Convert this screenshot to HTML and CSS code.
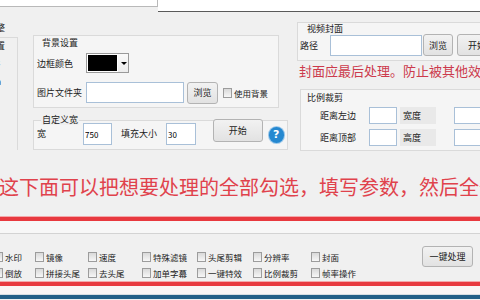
FILE: index.html
```html
<!DOCTYPE html>
<html lang="zh">
<head>
    <meta charset="UTF-8">
    <title>视频批量处理</title>
    <link rel="stylesheet" href="styles.css">
</head>
<body>
    <div class="top">
        <div class="top-field"></div>
        <div class="top-white"></div>
    </div>

    <div class="upper">
        <div class="side">
            <span class="side-cap">调整</span>
            <div class="side-box">
                <span class="frag">设置</span>
                <span class="frag f2">宽s</span>
                <span class="frag f3">高a</span>
            </div>
        </div>

        <div class="mid">
            <div class="group bg-set">
                <div class="cap">背景设置</div>
                <div class="row r1">
                    <span class="lbl">边框颜色</span>
                    <div class="combo"><span class="swatch"></span><span class="drop"></span></div>
                </div>
                <div class="row r2">
                    <span class="lbl">图片文件夹</span>
                    <input class="txt folder" type="text">
                    <button class="btn browse">浏览</button>
                    <label class="chk use-bg"><span class="box"></span>使用背景</label>
                </div>
            </div>

            <fieldset class="group custom">
                <legend>自定义宽</legend>
                <div class="row">
                    <span class="lbl w-lbl">宽</span>
                    <input class="txt num" type="text" value="750">
                    <span class="lbl fill-lbl">填充大小</span>
                    <input class="txt num n2" type="text" value="30">
                    <button class="btn start">开始</button>
                    <span class="help">?</span>
                </div>
            </fieldset>
        </div>

        <div class="right">
            <div class="group cover">
                <div class="cap">视频封面</div>
                <div class="row">
                    <span class="lbl path-lbl">路径</span>
                    <input class="txt path" type="text">
                    <button class="btn browse2">浏览</button>
                    <button class="btn open">开始</button>
                </div>
            </div>
            <p class="warn">封面应最后处理。防止被其他效果覆盖</p>
            <div class="group crop">
                <div class="cap">比例裁剪</div>
                <div class="row c1">
                    <span class="lbl dist">距离左边</span>
                    <input class="txt small" type="text">
                    <span class="lbl gray">宽度</span>
                    <input class="txt small s2" type="text">
                </div>
                <div class="row c2">
                    <span class="lbl dist">距离顶部</span>
                    <input class="txt small" type="text">
                    <span class="lbl gray">高度</span>
                    <input class="txt small s2" type="text">
                </div>
            </div>
        </div>
    </div>

    <p class="notice">这下面可以把想要处理的全部勾选，填写参数，然后全部处理</p>
    <div class="redline"></div>

    <div class="ops">
        <div class="ops-strip"></div>
        <div class="ops-body">
            <div class="ops-grid">
                <label class="chk"><span class="box"></span>水印</label>
                <label class="chk"><span class="box"></span>镜像</label>
                <label class="chk"><span class="box"></span>速度</label>
                <label class="chk"><span class="box"></span>特殊滤镜</label>
                <label class="chk"><span class="box"></span>头尾剪辑</label>
                <label class="chk"><span class="box"></span>分辨率</label>
                <label class="chk"><span class="box"></span>封面</label>
                <label class="chk"><span class="box"></span>倒放</label>
                <label class="chk"><span class="box"></span>拼接头尾</label>
                <label class="chk"><span class="box"></span>去头尾</label>
                <label class="chk"><span class="box"></span>加单字幕</label>
                <label class="chk"><span class="box"></span>一键特效</label>
                <label class="chk"><span class="box"></span>比例裁剪</label>
                <label class="chk"><span class="box"></span>帧率操作</label>
            </div>
            <button class="btn go">一键处理</button>
        </div>
    </div>
    <div class="redline"></div>

    <div class="foot"></div>
    <div class="taskbar"></div>
</body>
</html>
```

FILE: styles.css
```css
*{
    box-sizing: border-box;
}
body{
    margin: 0;
    width: 480px;
    height: 300px;
    overflow: hidden;
    background: #f0f0f0;
    font-family: "Noto Sans CJK SC", "Noto Sans", sans-serif;
    font-size: 9px;
    color: #222;
}
input, button{
    font-family: inherit;
    font-size: 8px;
    margin: 0;
}

/* top strip */
.top{
    display: flex;
    height: 12px;
}
.top-field{
    width: 158px;
    height: 7px;
    background: #fff;
    border-right: 1px solid #b9b9b9;
    border-bottom: 1px solid #b9b9b9;
}
.top-white{
    flex: 1;
    background: #fff;
    border-bottom: 1px solid #5a5a5a;
}

/* upper panel */
.upper{
    display: flex;
    align-items: flex-start;
    height: 140px;
}
.side{
    width: 18px;
    margin-top: 11px;
    overflow: hidden;
}
.side-cap, .frag{
    display: block;
    white-space: nowrap;
    line-height: 10px;
    margin-left: -13px;
}
.side-box{
    margin-top: 4px;
    height: 113px;
    border-right: 1px solid #dadada;
    border-top: 1px solid #dadada;
    padding-top: 3px;
}
.frag.f2{
    margin-top: 7px;
}
.frag.f3{
    margin-top: 9px;
}

.group{
    border: 1px solid #dadada;
    background: #f5f5f5;
}
.cap{
    line-height: 10px;
    white-space: nowrap;
}
.row{
    display: flex;
    align-items: center;
}
.lbl{
    white-space: nowrap;
    flex: none;
}

.mid{
    width: 255px;
    margin-left: 15px;
    flex: none;
}
.bg-set{
    width: 246px;
    margin-top: 23px;
    padding: 2px 3px 4px 3px;
}
.bg-set .cap{
    margin-left: 5px;
}
.bg-set .r1{
    margin-top: 5px;
    height: 20px;
}
.bg-set .r2{
    margin-top: 9px;
    height: 21px;
}
.bg-set .lbl{
    width: 49px;
}
.combo{
    display: flex;
    width: 43px;
    height: 20px;
    border: 1px solid #9a9a9a;
    background: #fff;
}
.swatch{
    width: 29px;
    margin: 1px;
    background: #000;
}
.drop{
    flex: 1;
    position: relative;
    background: linear-gradient(#fafafa, #ececec);
}
.drop::after{
    content: '';
    position: absolute;
    left: 3px;
    top: 8px;
    border-left: 3px solid transparent;
    border-right: 3px solid transparent;
    border-top: 3px solid #000;
}

.txt{
    height: 21px;
    border: 1px solid #a9c0d8;
    background: #fff;
    padding: 0 1px;
    outline: none;
    color: #000;
}
.folder{
    width: 98px;
}
.btn{
    border: 1px solid #b3b3b3;
    border-radius: 3px;
    background: linear-gradient(#f2f2f2, #e2e2e2);
    color: #222;
    padding: 0;
    font-size: 9px;
}
.browse{
    width: 31px;
    height: 22px;
    margin-left: 3px;
}
.chk{
    display: flex;
    align-items: center;
    white-space: nowrap;
    font-size: 8.5px;
}
.box{
    width: 9px;
    height: 10px;
    margin-right: 2px;
    border: 1px solid #9c9c9c;
    background: linear-gradient(#d9d9d9, #f7f7f7);
    flex: none;
}
.use-bg{
    margin-left: 5px;
}

/* custom width */
.custom{
    width: 255px;
    margin: 7px 0 0;
    padding: 0 3px 4px 3px;
    min-width: 0;
}
.custom legend{
    margin-left: 4px;
    padding: 0 1px;
    line-height: 10px;
    background: #f0f0f0;
}
.custom .row{
    margin-top: -2px;
    height: 22px;
    align-items: flex-start;
}
.custom .lbl{
    line-height: 22px;
}
.w-lbl{
    width: 46px;
}
.num{
    width: 29px;
    height: 22px;
}
.fill-lbl{
    width: 45px;
    margin-left: 9px;
}
.num.n2{
    width: 30px;
}
.start{
    width: 51px;
    height: 23px;
    margin-left: 17px;
    margin-top: -4px;
}
.help{
    width: 16px;
    height: 16px;
    margin-left: 6px;
    margin-top: 4px;
    border-radius: 50%;
    background: #2588d0;
    box-shadow: 0 0 0 1px #9cc8ea;
    color: #fff;
    font-family: "DejaVu Sans", sans-serif;
    font-weight: bold;
    font-size: 11px;
    line-height: 16px;
    text-align: center;
}

/* right column */
.right{
    width: 183px;
    margin-left: 9px;
    margin-top: 10px;
    flex: none;
}
.cover{
    width: 200px;
    padding: 1px 0 4px 0;
    border-right: 0;
}
.cover .cap{
    margin-left: 9px;
}
.path-lbl{
    width: 32px;
    padding-left: 2px;
}
.path{
    width: 92px;
}
.browse2{
    width: 30px;
    height: 22px;
    margin-left: 1px;
}
.open{
    width: 40px;
    height: 22px;
    margin-left: 4px;
}
.warn{
    margin: 2px 0 0 2px;
    line-height: 16px;
    font-size: 13px;
    color: #cc3a4c;
    white-space: nowrap;
}
.crop{
    width: 200px;
    margin: 10px 0 0 3px;
    padding: 3px 0 4px 0;
    border-right: 0;
}
.crop .cap{
    margin-left: 6px;
}
.crop .row{
    height: 17px;
}
.crop .c1{
    margin-top: 4px;
}
.crop .c2{
    margin-top: 5px;
}
.dist{
    width: 68px;
    padding-left: 19px;
}
.small{
    width: 28px;
    height: 17px;
}
.gray{
    width: 36px;
    height: 17px;
    margin-left: 3px;
    padding-left: 3px;
    line-height: 17px;
    background: #e9e9e9;
}
.small.s2{
    width: 36px;
    margin-left: 18px;
}

/* notice */
.notice{
    margin: 23px 0 0 -1px;
    line-height: 24px;
    font-size: 20px;
    color: #e0424c;
    white-space: nowrap;
}
.redline{
    height: 4px;
    background: #e8393f;
    box-shadow: 0 -1px 0 #f3a9ab, 0 1px 0 #f6c6c8;
}
.notice + .redline{
    margin-top: 18px;
}

/* operations */
.ops-strip{
    height: 13px;
    background: #f7f7f7;
    border-bottom: 1px solid #d3d3d3;
}
.ops-body{
    display: flex;
    align-items: flex-start;
    padding: 12px 7px 4px 0;
}
.ops-grid{
    display: grid;
    grid-template-columns: 41px 53px 54px 55px 56px 58px auto;
    grid-auto-rows: 10px;
    row-gap: 6px;
    margin-left: -6px;
    margin-top: 6px;
}
.go{
    width: 51px;
    height: 21px;
    margin-left: auto;
}

.foot{
    height: 9px;
    background: #faf5f5;
    border-bottom: 1px solid #d8dde2;
}
.taskbar{
    height: 4px;
    background: #245f87;
}
```
